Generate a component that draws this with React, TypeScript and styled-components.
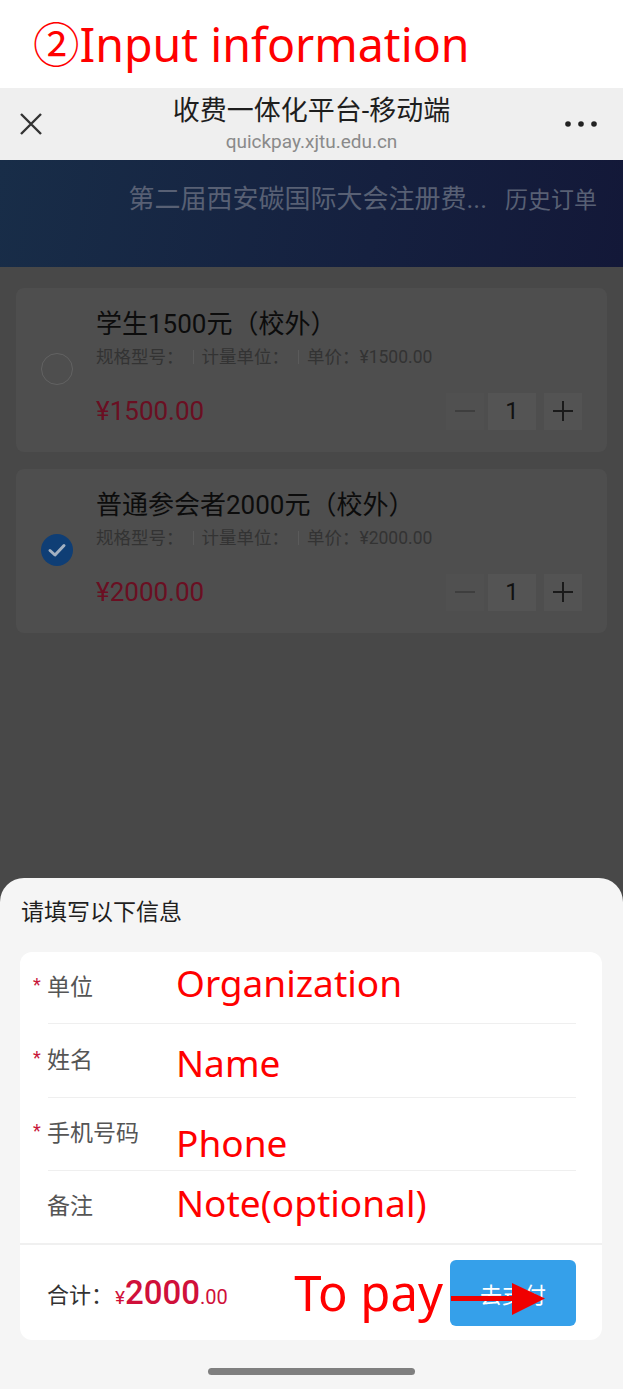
import React from "react";
import styled, { createGlobalStyle } from "styled-components";

const GlobalStyle = createGlobalStyle`
  html, body {
    margin: 0;
    padding: 0;
  }
  body {
    width: 623px;
    background: #f5f5f5;
    font-family: Roboto, "Noto Sans CJK SC", sans-serif;
  }
  * {
    box-sizing: border-box;
  }
`;

const Screen = styled.div`
  width: 623px;
  height: 1389px;
  display: flex;
  flex-direction: column;
  overflow: hidden;
  background: #484848;
`;

const Caption = styled.div`
  height: 88px;
  flex-shrink: 0;
  background: #fff;
  padding: 21px 0 0 33px;
  font-family: "Noto Sans", "Noto Sans CJK SC", sans-serif;
  font-size: 46.5px;
  line-height: 46px;
  color: #ff0000;
`;

const NavBar = styled.div`
  height: 72px;
  flex-shrink: 0;
  background: #efefef;
  display: grid;
  grid-template-columns: 90px 1fr 90px;
  align-items: center;
`;

const NavLeft = styled.div`
  padding-left: 20px;
  display: flex;
`;

const NavRight = styled.div`
  padding-right: 26px;
  display: flex;
  justify-content: flex-end;
`;

const NavCenter = styled.div`
  display: flex;
  flex-direction: column;
  align-items: center;
`;

const NavTitle = styled.div`
  font-size: 27px;
  line-height: 31px;
  color: #1e1e1e;
`;

const NavUrl = styled.div`
  margin-top: 4px;
  font-size: 19px;
  line-height: 21px;
  color: #8a8a8a;
`;

const Banner = styled.div`
  height: 107px;
  flex-shrink: 0;
  background: linear-gradient(100deg, #182d48 0%, #15203f 60%, #131838 100%);
  display: flex;
  justify-content: flex-end;
  align-items: baseline;
  gap: 18px;
  padding: 24px 26px 0 0;
  color: #586074;
`;

const BannerTitle = styled.span`
  font-size: 26px;
  line-height: 30px;
`;

const BannerLink = styled.span`
  font-size: 23px;
  line-height: 30px;
`;

const DimArea = styled.div`
  flex: 1;
  background: #484848;
  padding: 21px 16px 0;
  display: flex;
  flex-direction: column;
  gap: 17px;
`;

const ItemCard = styled.div`
  background: #4e4e4e;
  border-radius: 8px;
  display: flex;
  align-items: center;
  gap: 23px;
  padding: 20px 25px 22px 25px;
`;

const Radio = styled.div<{ $checked?: boolean }>`
  width: 32px;
  height: 32px;
  flex-shrink: 0;
  border-radius: 50%;
  border: ${(p) => (p.$checked ? "none" : "1.5px solid #626262")};
  background: ${(p) => (p.$checked ? "#0f3e75" : "transparent")};
  display: flex;
  align-items: center;
  justify-content: center;
`;

const ItemBody = styled.div`
  flex: 1;
  display: flex;
  flex-direction: column;
`;

const ItemTitle = styled.div`
  font-size: 26px;
  line-height: 32px;
  color: #0c0c0c;
`;

const SpecLine = styled.div`
  margin-top: 6px;
  display: flex;
  align-items: center;
  font-size: 17.5px;
  line-height: 22px;
  color: #333;
`;

const Spec = styled.span`
  display: flex;
  align-items: center;
  & + &::before {
    content: "";
    width: 1px;
    height: 14px;
    background: #5a5a5a;
    margin: 0 8px 0 0;
  }
`;

const SpecText = styled.span<{ $gap?: boolean }>`
  padding-right: ${(p) => (p.$gap ? "9px" : "0")};
`;

const PriceRow = styled.div`
  margin-top: 24px;
  height: 38px;
  display: flex;
  align-items: center;
  justify-content: space-between;
`;

const Price = styled.span`
  font-size: 26px;
  color: #6a0f22;
`;

const Stepper = styled.div`
  display: flex;
  align-items: center;
`;

const StepBox = styled.div<{ $w: number; $bg: string; $ml?: number }>`
  width: ${(p) => p.$w}px;
  height: 37px;
  margin-left: ${(p) => p.$ml ?? 0}px;
  background: ${(p) => p.$bg};
  display: flex;
  align-items: center;
  justify-content: center;
  font-size: 24px;
  color: #111;
`;

const Sheet = styled.div`
  flex-shrink: 0;
  background: #f5f5f5;
  border-radius: 24px 24px 0 0;
  padding: 20px 21px 14px 20px;
  display: flex;
  flex-direction: column;
`;

const SheetTitle = styled.div`
  font-size: 23px;
  line-height: 30px;
  color: #1f1f1f;
  padding-left: 1px;
`;

const FormCard = styled.div`
  margin-top: 24px;
  background: #fff;
  border-radius: 12px;
  display: flex;
  flex-direction: column;
  overflow: hidden;
`;

const FormRow = styled.div<{ $h: number }>`
  height: ${(p) => p.$h}px;
  display: flex;
  align-items: center;
  padding-left: 13px;
`;

const Divider = styled.div`
  height: 1px;
  margin: 0 26px 0 28px;
  background: #efefef;
`;

const Label = styled.div`
  width: 143px;
  flex-shrink: 0;
  display: flex;
  align-items: center;
  font-size: 23px;
  line-height: 30px;
  color: #555;
`;

const Star = styled.span`
  width: 14px;
  font-size: 18px;
  line-height: 18px;
  color: #c8173a;
  align-self: flex-start;
  margin-top: 3px;
`;

const Note = styled.span<{ $shift?: number; $size?: number }>`
  font-family: "Noto Sans", sans-serif;
  font-size: ${(p) => p.$size ?? 37}px;
  line-height: 1;
  color: #ff0000;
  transform: translateY(${(p) => p.$shift ?? 0}px);
`;

const Footer = styled.div`
  height: 97px;
  border-top: 2px solid #f0f0f0;
  display: flex;
  align-items: center;
  padding: 0 26px 0 27px;
`;

const TotalLabel = styled.span`
  font-size: 22px;
  color: #333;
`;

const Amount = styled.span`
  color: #d0103a;
  display: flex;
  align-items: baseline;
  margin-left: 2px;
`;

const AmountPart = styled.span<{ $size: number; $weight?: number }>`
  font-size: ${(p) => p.$size}px;
  font-weight: ${(p) => p.$weight ?? 400};
`;

const PayNote = styled(Note)`
  margin-left: auto;
`;

const PayButton = styled.div`
  position: relative;
  width: 126px;
  height: 66px;
  margin-left: 7px;
  border-radius: 6px;
  background: #35a0ea;
  color: #fff;
  font-size: 22px;
  display: flex;
  align-items: center;
  justify-content: center;
`;

const Arrow = styled.svg`
  position: absolute;
  left: 0;
  top: 0;
`;

const HomeBar = styled.div`
  align-self: center;
  width: 207px;
  height: 7px;
  margin-top: 28px;
  border-radius: 4px;
  background: #7f7f7f;
`;

type Item = { title: string; price: string; checked?: boolean };

const items: Item[] = [
  { title: "学生1500元（校外）", price: "1500.00" },
  { title: "普通参会者2000元（校外）", price: "2000.00", checked: true },
];

const fields = [
  { label: "单位", required: true, note: "Organization", h: 71, shift: -5 },
  { label: "姓名", required: true, note: "Name", h: 73, shift: 2 },
  { label: "手机号码", required: true, note: "Phone", h: 72, shift: 8 },
  { label: "备注", required: false, note: "Note(optional)", h: 72, shift: -5 },
];

function App() {
  return (
    <Screen>
      <GlobalStyle />
      <Caption>②Input information</Caption>

      <NavBar>
        <NavLeft>
          <svg width="22" height="22" viewBox="0 0 22 22">
            <path d="M1 1 L21 21 M21 1 L1 21" stroke="#333" strokeWidth="2.4" fill="none" />
          </svg>
        </NavLeft>
        <NavCenter>
          <NavTitle>收费一体化平台-移动端</NavTitle>
          <NavUrl>quickpay.xjtu.edu.cn</NavUrl>
        </NavCenter>
        <NavRight>
          <svg width="32" height="6" viewBox="0 0 32 6">
            <circle cx="3" cy="3" r="2.8" fill="#222" />
            <circle cx="16" cy="3" r="2.8" fill="#222" />
            <circle cx="29" cy="3" r="2.8" fill="#222" />
          </svg>
        </NavRight>
      </NavBar>

      <Banner>
        <BannerTitle>第二届西安碳国际大会注册费...</BannerTitle>
        <BannerLink>历史订单</BannerLink>
      </Banner>

      <DimArea>
        {items.map((item) => (
          <ItemCard key={item.title}>
            <Radio $checked={item.checked}>
              {item.checked && (
                <svg width="20" height="16" viewBox="0 0 20 16">
                  <path
                    d="M3 8.5 L8 13 L17 3.5"
                    stroke="#a3b1c2"
                    strokeWidth="3"
                    fill="none"
                    strokeLinecap="round"
                    strokeLinejoin="round"
                  />
                </svg>
              )}
            </Radio>
            <ItemBody>
              <ItemTitle>{item.title}</ItemTitle>
              <SpecLine>
                <Spec>
                  <SpecText $gap>规格型号：</SpecText>
                </Spec>
                <Spec>
                  <SpecText $gap>计量单位：</SpecText>
                </Spec>
                <Spec>
                  <SpecText>单价：¥{item.price}</SpecText>
                </Spec>
              </SpecLine>
              <PriceRow>
                <Price>¥{item.price}</Price>
                <Stepper>
                  <StepBox $w={38} $bg="#505050">
                    <svg width="20" height="2" viewBox="0 0 20 2">
                      <rect width="20" height="2" fill="#3e3e3e" />
                    </svg>
                  </StepBox>
                  <StepBox $w={48} $bg="#545454" $ml={4}>
                    1
                  </StepBox>
                  <StepBox $w={38} $bg="#535353" $ml={8}>
                    <svg width="20" height="20" viewBox="0 0 20 20">
                      <path d="M10 0 V20 M0 10 H20" stroke="#1a1a1a" strokeWidth="2" />
                    </svg>
                  </StepBox>
                </Stepper>
              </PriceRow>
            </ItemBody>
          </ItemCard>
        ))}
      </DimArea>

      <Sheet>
        <SheetTitle>请填写以下信息</SheetTitle>
        <FormCard>
          {fields.map((f, i) => (
            <React.Fragment key={f.label}>
              {i > 0 && <Divider />}
              <FormRow $h={f.h}>
                <Label>
                  <Star>{f.required ? "*" : ""}</Star>
                  {f.label}
                </Label>
                <Note $shift={f.shift}>{f.note}</Note>
              </FormRow>
            </React.Fragment>
          ))}
          <Footer>
            <TotalLabel>合计：</TotalLabel>
            <Amount>
              <AmountPart $size={19}>¥</AmountPart>
              <AmountPart $size={33} $weight={500}>
                2000
              </AmountPart>
              <AmountPart $size={20}>.00</AmountPart>
            </Amount>
            <PayNote $size={49}>To pay</PayNote>
            <PayButton>
              去支付
              <Arrow width="100" height="66" viewBox="0 0 100 66">
                <rect x="1" y="36" width="66" height="5" fill="#f00000" />
                <polygon points="62,23 95,38.5 62,55" fill="#f00000" />
              </Arrow>
            </PayButton>
          </Footer>
        </FormCard>
        <HomeBar />
      </Sheet>
    </Screen>
  );
}

export default App;
